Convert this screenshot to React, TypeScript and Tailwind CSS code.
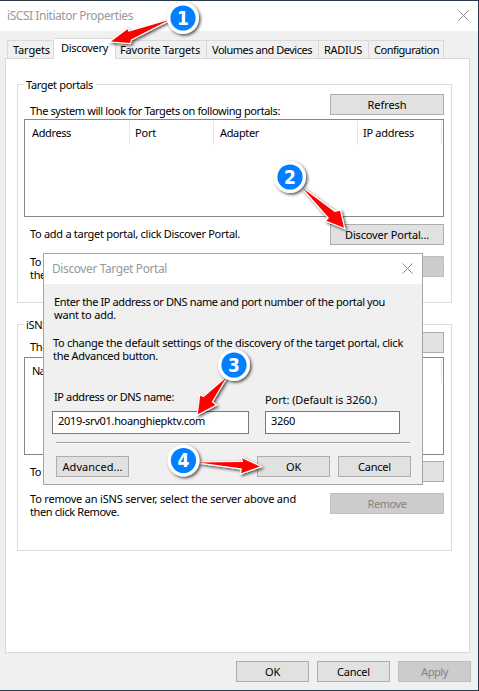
import { useLayoutEffect, useRef, useState } from "react";
import type { ReactNode } from "react";

/** One line of text whose tracking is set so that it spans `w` pixels. */
function T({ w, children, className = "" }: { w?: number; children: string; className?: string }) {
  const ref = useRef<HTMLSpanElement>(null);
  const [gap, setGap] = useState(0);
  useLayoutEffect(() => {
    if (!w || !ref.current) return;
    const natural = ref.current.getBoundingClientRect().width;
    setGap((w - natural) / children.length);
  }, []);
  return (
    <span className={`block w-max whitespace-pre leading-[13px] ${className}`}>
      <span ref={ref} className="inline-block" style={gap ? { letterSpacing: gap } : undefined}>
        {children}
      </span>
    </span>
  );
}

function Button({ label, w, disabled, className = "" }: { label?: string; w?: number; disabled?: boolean; className?: string }) {
  return (
    <button
      className={`flex h-[21px] shrink-0 items-center justify-center border ${
        disabled ? "border-[#bfbfbf] bg-[#cccccc] text-[#838383]" : "border-[#adadad] bg-[#e1e1e1] text-black"
      } ${className}`}
    >
      {label && <T w={w}>{label}</T>}
    </button>
  );
}

function Tab({ label, w, className = "" }: { label: string; w: number; className?: string }) {
  return (
    <div className={`h-[18px] border-t border-r border-[#d9d9d9] pt-0.5 ${className}`}>
      <T w={w}>{label}</T>
    </div>
  );
}

function Group({ title, w, className = "", children }: { title: string; w: number; className?: string; children: ReactNode }) {
  return (
    <section className={`relative w-[435px] border border-[#dcdcdc] pr-[7px] pl-1.5 ${className}`}>
      <div className="absolute top-[-7px] left-1.5 bg-white pr-[3px] pl-0.5">
        <T w={w}>{title}</T>
      </div>
      {children}
    </section>
  );
}

function CloseIcon() {
  return (
    <svg width="11" height="11" viewBox="0 0 11 11" className="shrink-0">
      <path d="M0.5 0.5L10.5 10.5M10.5 0.5L0.5 10.5" stroke="#8a8a8a" strokeWidth="1" fill="none" />
    </svg>
  );
}

function Column({ label, w, className = "" }: { label: string; w: number; className?: string }) {
  return (
    <div className={`h-6 border-r border-[#e5e5e5] pt-[5px] ${className}`}>
      <T w={w}>{label}</T>
    </div>
  );
}

function Dialog() {
  return (
    <div className="absolute top-[252px] left-[43px] flex h-[232px] w-[380px] flex-col border border-[#a5a5a5] bg-[#f0f0f0]">
      <div className="flex h-[30px] shrink-0 items-center justify-between bg-white pr-[9px] pb-px pl-2 text-[12px] text-[#999999]">
        <T w={115}>Discover Target Portal</T>
        <CloseIcon />
      </div>
      <div className="pt-[11px] pl-2.5">
        <T w={331}>Enter the IP address or DNS name and port number of the portal you</T>
        <T w={62}>want to add.</T>
      </div>
      <div className="pt-[15px] pl-[9px]">
        <T w={350}>To change the default settings of the discovery of the target portal, click</T>
        <T w={105}>the Advanced button.</T>
      </div>
      <div className="flex h-[72px] shrink-0 items-end pl-2">
        <div className="w-[213px]">
          <T w={120} className="mb-2 ml-0.5">IP address or DNS name:</T>
          <div className="h-[23px] w-[197px] border border-[#7a7a7a] bg-white pt-0.5 pl-[5px]">
            <T w={147}>2019-srv01.hoanghiepktv.com</T>
          </div>
        </div>
        <div>
          <T w={112} className="mb-[5px]">Port: (Default is 3260.)</T>
          <div className="h-[23px] w-[135px] border border-[#7a7a7a] bg-white pt-0.5 pl-[5px]">
            <T w={24}>3260</T>
          </div>
        </div>
      </div>
      <div className="mx-3 mt-2 h-0.5 shrink-0 border-t border-b border-t-[#a0a0a0] border-b-white" />
      <div className="flex pt-3 pl-3">
        <Button label="Advanced..." w={60} className="w-[73px]" />
        <Button label="OK" w={15} className="ml-32 w-[73px]" />
        <Button label="Cancel" w={33} className="ml-2 w-[73px]" />
      </div>
    </div>
  );
}

function Marker({ x, y, n, arrow }: { x: number; y: number; n: number; arrow: string }) {
  return (
    <>
      <g filter="url(#shadow)">
        <polygon points={arrow} fill="#ff0000" stroke="#ffffff" strokeWidth="2.2" strokeLinejoin="miter" paintOrder="stroke" />
      </g>
      <g filter="url(#shadow)">
        <circle cx={x} cy={y} r="16" fill="#ffffff" />
      </g>
      <circle cx={x} cy={y} r="12.6" fill="#0080ff" />
      <text
        x={x}
        y={y + 6.8}
        textAnchor="middle"
        fill="#ffffff"
        fontSize="19"
        fontWeight="700"
        fontFamily="'DejaVu Sans Condensed', 'DejaVu Sans', sans-serif"
      >
        {n}
      </text>
    </>
  );
}

export default function App() {
  return (
    <div className="relative flex h-[691px] w-[479px] flex-col overflow-hidden border-t border-r border-b border-[#2a3a4c] bg-[#f0f0f0] font-['Noto_Sans','DejaVu_Sans',sans-serif] text-[11px] text-black">
      <header className="flex h-[30px] shrink-0 items-center justify-between bg-white pr-[9px] pb-px pl-[7px] text-[12px] text-[#999999]">
        <T w={126}>iSCSI Initiator Properties</T>
        <CloseIcon />
      </header>

      <nav className="relative z-10 mt-[7px] flex h-[21px] shrink-0 items-end pb-px pl-[7px]">
        <Tab label="Targets" w={37} className="w-[47px] border-l pl-[5px]" />
        <div className="-mb-px h-[21px] w-[62px] border-t border-r border-[#d9d9d9] bg-white pt-0.5 pl-[7px]">
          <T w={47}>Discovery</T>
        </div>
        <Tab label="Favorite Targets" w={80} className="w-[91px] pl-1" />
        <Tab label="Volumes and Devices" w={100} className="w-[112px] pl-[5px]" />
        <Tab label="RADIUS" w={38} className="w-[50px] pl-[5px]" />
        <Tab label="Configuration" w={65} className="w-[75px] pl-[5px]" />
      </nav>

      <main className="-mt-px ml-[5px] h-[595px] w-[465px] shrink-0 border border-[#d9d9d9] bg-white pt-[25px] pl-[11px]">
        <Group title="Target portals" w={67} className="h-[219px]">
          <div className="mt-[9px] flex h-[21px] justify-between pl-1.5">
            <T w={250} className="mt-2.5">The system will look for Targets on following portals:</T>
            <Button label="Refresh" w={39} className="w-[114px]" />
          </div>
          <div className="mt-1 h-[98px] border border-[#828790] pt-px">
            <div className="flex">
              <Column label="Address" w={39} className="w-[105px] pl-[7px]" />
              <Column label="Port" w={21} className="w-[84px] pl-[5px]" />
              <Column label="Adapter" w={39} className="w-36 pl-1.5" />
              <Column label="IP address" w={51} className="w-[84px] pl-[5px]" />
            </div>
          </div>
          <div className="mt-[7px] flex h-[21px] justify-between pl-1.5">
            <T w={210} className="mt-[3px]">To add a target portal, click Discover Portal.</T>
            <Button label="Discover Portal..." w={84} className="w-[114px]" />
          </div>
          <div className="mt-2.5 flex justify-between pl-1.5">
            <div>
              <T w={11}>To</T>
              <T w={16}>the</T>
            </div>
            <Button disabled className="mt-px w-[114px]" />
          </div>
        </Group>

        <Group title="iSNS" w={22} className="mt-[21px] h-[227px]">
          <div className="mt-[7px] flex h-[21px] justify-between pl-1.5">
            <T w={18} className="mt-2">The</T>
            <Button className="w-[114px]" />
          </div>
          <div className="mt-1 h-[98px] border border-[#828790] pt-px">
            <Column label="Na" w={13} className="w-[417px] pl-[7px]" />
          </div>
          <div className="mt-1.5 flex h-[21px] justify-between pl-1.5">
            <T w={11} className="mt-1">To</T>
            <Button className="w-[114px]" />
          </div>
          <div className="mt-2.5 flex justify-between pl-1.5">
            <div>
              <T w={266}>To remove an iSNS server, select the server above and</T>
              <T w={89}>then click Remove.</T>
            </div>
            <Button label="Remove" w={39} disabled className="mt-px w-[114px]" />
          </div>
        </Group>
      </main>

      <footer className="flex gap-2 pt-2 pl-[236px]">
        <Button label="OK" w={15} className="w-[73px]" />
        <Button label="Cancel" w={33} className="w-[73px]" />
        <Button label="Apply" w={27} disabled className="w-[73px]" />
      </footer>

      <Dialog />

      <svg className="absolute top-[-1px] left-0 z-20" width="479" height="691" viewBox="0 0 479 691">
        <defs>
          <filter id="shadow" x="-30%" y="-30%" width="170%" height="170%">
            <feDropShadow dx="1.5" dy="1.5" stdDeviation="1.7" floodColor="#000000" floodOpacity="0.7" />
          </filter>
        </defs>
        <Marker x={183} y={18} n={1} arrow="111,41.5 127.5,29.3 128.5,31.8 169,20 131,39.6 130,43" />
        <Marker x={290} y={177} n={2} arrow="344,227.7 326.3,220.7 329,218 302.5,188 334.7,212 340,210.7" />
        <Marker x={234} y={365} n={3} arrow="197.8,414.3 200.3,395.5 203.5,397.3 226,378 211.7,402 215.5,405" />
        <Marker x={183.5} y={460.5} n={4} arrow="260,466.6 241,473.2 242,468.6 199,462.6 243.3,462 242,458.3" />
      </svg>
    </div>
  );
}
